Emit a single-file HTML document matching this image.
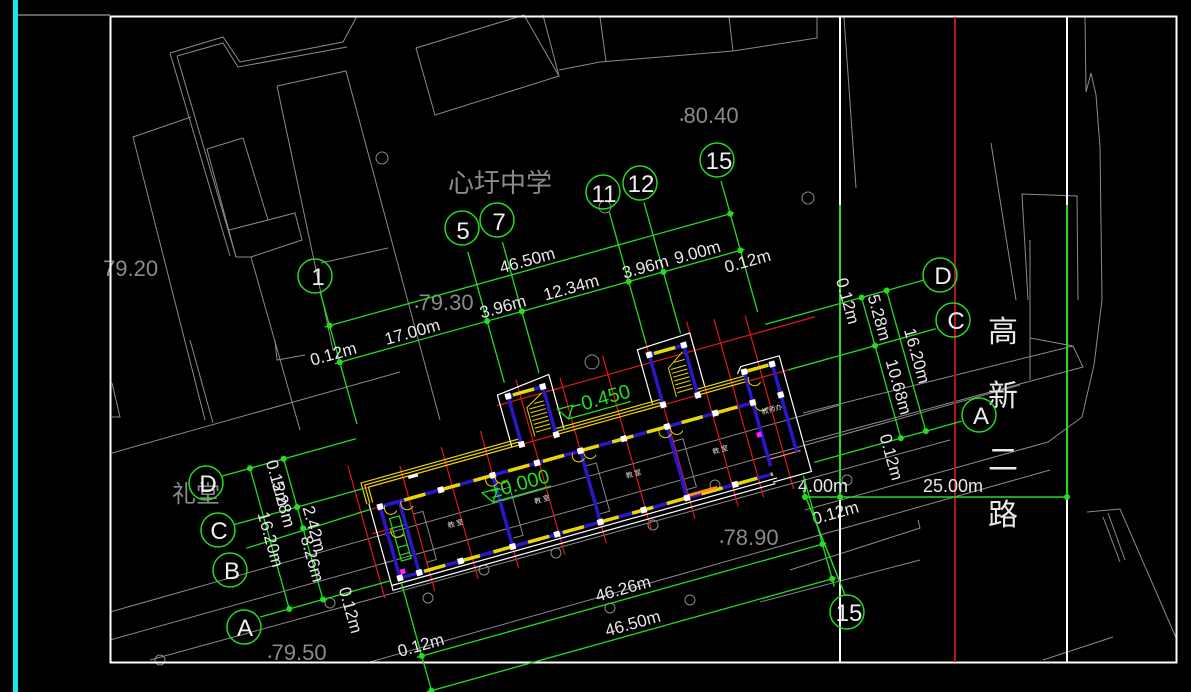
<!DOCTYPE html>
<html><head><meta charset="utf-8"><style>
html,body{margin:0;padding:0;background:#000;width:1191px;height:692px;overflow:hidden}
svg{display:block}
text{font-family:"Liberation Sans","Noto Sans CJK SC",sans-serif}
</style></head><body>
<svg width="1191" height="692" viewBox="0 0 1191 692" xmlns="http://www.w3.org/2000/svg">
<rect width="1191" height="692" fill="#000"/>
<rect x="13" y="0" width="5" height="692" fill="#18e6ea"/>
<line x1="18" y1="15" x2="110" y2="15" stroke="#9a9a9a" stroke-width="1.2"/>

<!-- gray background lines -->
<g stroke="#8a8a8a" stroke-width="1" fill="none">
<polyline points="170,53 223,37 240,62 343,42 357,16"/>
<polyline points="177,56 223,43 238,67 347,47"/>
<line x1="170" y1="53" x2="230" y2="256"/>
<line x1="177" y1="56" x2="236" y2="257"/>
<polyline points="191,117 133,137 205,420"/>
<polyline points="277,86 346,71 421,350 440,420"/>
<line x1="277" y1="86" x2="333" y2="350"/>
<polyline points="207,149 243,138 268,220"/>
<line x1="207" y1="149" x2="236" y2="257"/>
<polyline points="229,230 295,213 302,240 251,257 236,257"/>
<line x1="251" y1="257" x2="300" y2="430"/>
<line x1="321" y1="263" x2="388" y2="248"/>
<polyline points="416,48 524,15 559,76 435,115 416,48"/>
<line x1="543" y1="15" x2="559" y2="76"/>
<polyline points="559,70 600,62 733,51 817,38 817,17"/>
<line x1="600" y1="17" x2="606" y2="62"/>
<line x1="729" y1="17" x2="733" y2="51"/>
<line x1="844" y1="17" x2="856" y2="188"/>
<line x1="991" y1="143" x2="1016" y2="300"/>
<polyline points="1028,300 1022,194 1077,196 1078,300"/>
<polyline points="1085,17 1086,92 1091,73 1096,95 1100,147 1102,300 1094,365 1082,417 1048,442 805,510"/>
<line x1="1030" y1="240" x2="1030" y2="380"/>
<polyline points="1030,338 1073,346 1083,367 805,442"/>
<polyline points="803,413 1073,346"/>
<polyline points="1087,512 1120,509 1177,640"/>
<polyline points="1103,517 1120,562"/>
<polyline points="1108,513 1125,560"/>
<polyline points="790,570 920,528 918,520"/>
<polyline points="1043,660 1113,637"/>
<line x1="112" y1="453" x2="400" y2="372"/>
<line x1="190" y1="340" x2="213" y2="423"/>
<polyline points="112,383 120,417 112,417"/>
<polyline points="275,340 277,360 305,355"/>
<circle cx="382" cy="158" r="6"/>
<circle cx="808" cy="198" r="6"/>
<circle cx="605" cy="207" r="6"/>
<circle cx="592" cy="362" r="7"/>
<line x1="110" y1="612" x2="840" y2="405"/>
<line x1="110" y1="640" x2="1020" y2="385"/>
<line x1="150" y1="660" x2="950" y2="440"/>
<line x1="370" y1="662" x2="1050" y2="470"/>
<line x1="760" y1="602" x2="920" y2="560"/>
<circle cx="715" cy="485" r="5"/><circle cx="653" cy="525" r="5"/>
<circle cx="556" cy="553" r="5"/><circle cx="484" cy="570" r="5"/>
<circle cx="428" cy="598" r="5"/><circle cx="610" cy="608" r="5"/>
<circle cx="690" cy="600" r="5"/><circle cx="847" cy="480" r="5"/>
<circle cx="160" cy="660" r="5"/><circle cx="330" cy="603" r="5"/>
</g>
<g fill="#8a8a8a" font-size="22">
<text x="448" y="192" font-size="26">心圩中学</text>
<text x="103" y="276">79.20</text>
<text x="680" y="123"><tspan font-size="10">•</tspan>80.40</text>
<text x="415" y="310"><tspan font-size="10">•</tspan>79.30</text>
<text x="720" y="545"><tspan font-size="10">•</tspan>78.90</text>
<text x="268" y="660"><tspan font-size="10">•</tspan>79.50</text>
<text x="172" y="502" font-size="24">礼堂</text>
</g>

<!-- frame -->
<rect x="110.5" y="16.5" width="1066" height="646" fill="none" stroke="#fff" stroke-width="2"/>
<line x1="840" y1="17" x2="840" y2="205" stroke="#fff" stroke-width="2"/>
<line x1="840" y1="497" x2="840" y2="662" stroke="#fff" stroke-width="2"/>
<line x1="1067" y1="17" x2="1067" y2="205" stroke="#fff" stroke-width="2"/>
<line x1="1067" y1="497" x2="1067" y2="662" stroke="#fff" stroke-width="2"/>
<line x1="840" y1="205" x2="840" y2="497" stroke="#22dd22" stroke-width="2"/>
<line x1="1067" y1="205" x2="1067" y2="497" stroke="#22dd22" stroke-width="2"/>
<line x1="955" y1="17" x2="955" y2="662" stroke="#b01818" stroke-width="2"/>
<line x1="803" y1="497" x2="1067" y2="497" stroke="#22dd22" stroke-width="1.5"/>
<g fill="#22dd22"><circle cx="805" cy="497" r="3"/><circle cx="840" cy="497" r="3"/><circle cx="1067" cy="497" r="3"/></g>
<g fill="#e8e8e8" font-size="18"><text x="798" y="492">4.00m</text><text x="923" y="492">25.00m</text></g>
<g fill="#e8e8e8" font-size="30"><text x="988" y="342">高</text><text x="988" y="406">新</text><text x="988" y="470">二</text><text x="988" y="525">路</text></g>

<g transform="translate(400,578) rotate(-15.6)">
 <g stroke="#e01818" stroke-width="1.2">
  <line x1="-25" y1="-96" x2="470" y2="-96"/>
  <line x1="140" y1="-140" x2="470" y2="-140"/>
  <line x1="-25" y1="-74" x2="0" y2="-74"/>
  <line x1="-15" y1="-50" x2="20" y2="-50"/>
  <line x1="-20" y1="-122" x2="-20" y2="15"/>
  <line x1="30" y1="-108" x2="30" y2="22"/>
  <line x1="75" y1="-115" x2="75" y2="22"/>
  <line x1="117" y1="-120" x2="117" y2="22"/>
  <line x1="165" y1="-160" x2="165" y2="22"/>
  <line x1="208" y1="-150" x2="208" y2="22"/>
  <line x1="255" y1="-160" x2="255" y2="22"/>
  <line x1="300" y1="-165" x2="300" y2="22"/>
  <line x1="345" y1="-170" x2="345" y2="22"/>
  <line x1="372" y1="-165" x2="372" y2="20"/>
  <line x1="403" y1="-160" x2="403" y2="20"/>
 </g>
 <g stroke="#fff" stroke-width="1.2" fill="none">
  <polyline points="-10,-80 -10,10 387,10"/>
  <line x1="-10" y1="5" x2="390" y2="5"/>
  <polyline points="143,-96 143,-150 198,-156 198,-100"/>
  <polyline points="290,-100 290,-156 345,-158 345,-103"/>
  <polyline points="380,-106 385,-112 425,-112 425,8 385,8"/>
  <line x1="387" y1="-15" x2="420" y2="-15" stroke="#ff8888"/>
 </g>
 <g stroke="#e8d800" stroke-width="1.2" fill="none">
  <polyline points="-6,-80 -6,-96 153,-96"/>
  <polyline points="-9,-80 -9,-99 153,-99"/>
  <polyline points="-12,-80 -12,-102 153,-102"/>
  <line x1="189" y1="-96" x2="300" y2="-96"/>
  <line x1="189" y1="-99" x2="300" y2="-99"/>
  <line x1="189" y1="-102" x2="300" y2="-102"/>
  <line x1="336" y1="-96" x2="387" y2="-96"/>
  <line x1="336" y1="-99" x2="387" y2="-99"/>
  <line x1="336" y1="-102" x2="387" y2="-102"/>
 </g>
 <g stroke="#2a18c8" stroke-width="3.5" fill="none">
  <line x1="0" y1="0" x2="387" y2="0"/>
  <line x1="0" y1="-74" x2="387" y2="-74"/>
  <line x1="0" y1="0" x2="0" y2="-74"/>
  <line x1="20" y1="0" x2="20" y2="-74"/>
  <line x1="117" y1="0" x2="117" y2="-74"/>
  <line x1="208" y1="0" x2="208" y2="-74"/>
  <line x1="298" y1="0" x2="298" y2="-74"/>
  <line x1="387" y1="-8" x2="387" y2="-106"/>
  <line x1="416" y1="-15" x2="416" y2="-106"/>
  <line x1="387" y1="-106" x2="416" y2="-106"/>
  <line x1="153" y1="-96" x2="153" y2="-146"/>
  <line x1="189" y1="-96" x2="189" y2="-146"/>
  <line x1="153" y1="-146" x2="189" y2="-146"/>
  <line x1="300" y1="-96" x2="300" y2="-148"/>
  <line x1="336" y1="-96" x2="336" y2="-148"/>
  <line x1="300" y1="-148" x2="336" y2="-148"/>
 </g>
 <g stroke="#e8d800" stroke-width="3.5" stroke-dasharray="22 14">
  <line x1="25" y1="0" x2="387" y2="0"/>
  <line x1="25" y1="-74" x2="387" y2="-74"/>
  <line x1="158" y1="-146" x2="189" y2="-146"/>
  <line x1="305" y1="-148" x2="336" y2="-148"/>
  <line x1="390" y1="-106" x2="416" y2="-106"/>
 </g>
 <line x1="300" y1="-2" x2="330" y2="-2" stroke="#ff8a1a" stroke-width="3"/>
 <g stroke="#e8d800" stroke-width="1">
  <path d="M168,-100 L168,-130 L186,-140 M170,-104 H186 M170,-108 H186 M170,-112 H186 M170,-116 H186 M170,-120 H186 M170,-124 H186 M170,-128 H186 M176,-132 H186"/>
  <path d="M315,-100 L315,-130 L333,-142 M317,-104 H333 M317,-108 H333 M317,-112 H333 M317,-116 H333 M317,-120 H333 M317,-124 H333 M317,-128 H333 M322,-134 H333"/>
 </g>
 <g stroke="#22dd22" stroke-width="1.2" fill="none">
  <rect x="6" y="-60" width="10" height="44"/>
  <path d="M6,-50 H16 M6,-40 H16 M6,-30 H16 M6,-22 H16"/>
 </g>
 <g fill="#ff22ff"><rect x="2" y="-8" width="5" height="5"/><rect x="382" y="-44" width="5" height="5"/></g>
 <g fill="#fff">
  <rect x="-3" y="-3" width="6" height="6"/><rect x="17" y="-3" width="6" height="6"/>
  <rect x="60" y="-3" width="6" height="6"/><rect x="114" y="-3" width="6" height="6"/>
  <rect x="160" y="-3" width="6" height="6"/><rect x="205" y="-3" width="6" height="6"/>
  <rect x="250" y="-3" width="6" height="6"/><rect x="295" y="-3" width="6" height="6"/>
  <rect x="345" y="-3" width="6" height="6"/>
  <rect x="-3" y="-77" width="6" height="6"/><rect x="60" y="-77" width="6" height="6"/>
  <rect x="114" y="-77" width="6" height="6"/><rect x="160" y="-77" width="6" height="6"/>
  <rect x="205" y="-77" width="6" height="6"/><rect x="250" y="-77" width="6" height="6"/>
  <rect x="295" y="-77" width="6" height="6"/><rect x="345" y="-77" width="6" height="6"/>
  <rect x="384" y="-77" width="6" height="6"/><rect x="413" y="-77" width="6" height="6"/>
  <rect x="384" y="-109" width="6" height="6"/><rect x="413" y="-109" width="6" height="6"/>
  <rect x="150" y="-99" width="6" height="6"/><rect x="186" y="-99" width="6" height="6"/>
  <rect x="150" y="-149" width="6" height="6"/><rect x="186" y="-149" width="6" height="6"/>
  <rect x="297" y="-99" width="6" height="6"/><rect x="333" y="-99" width="6" height="6"/>
  <rect x="297" y="-151" width="6" height="6"/><rect x="333" y="-151" width="6" height="6"/>
  <rect x="35" y="-96" width="10" height="3"/>
 </g>
 <g stroke="#e8d800" stroke-width="1" fill="none">
  <path d="M5,-74 a6,6 0 0 0 10,8 M22,-74 a6,6 0 0 0 10,8 M110,-74 a6,6 0 0 0 10,8 M120,-74 a6,6 0 0 0 10,8 M200,-74 a6,6 0 0 0 10,8 M212,-74 a6,6 0 0 0 10,8 M290,-74 a6,6 0 0 0 10,8 M302,-74 a6,6 0 0 0 10,8 M390,-74 a6,6 0 0 0 10,8 M390,-100 a6,6 0 0 0 10,8 M5,-50 a6,6 0 0 0 10,8"/>
 </g>
 <g stroke="#888" stroke-width="1" fill="none">
  <path d="M30,-8 h10 v-50 h-10 M120,-8 h10 v-50 h-10 M210,-8 h10 v-50 h-10 M300,-8 h10 v-50 h-10"/>
 </g>
 <g fill="#ddd" font-size="7"><text x="60" y="-35">教 室</text><text x="150" y="-35">教 室</text><text x="245" y="-35">教 室</text><text x="335" y="-35">教 室</text><text x="393" y="-60">教师办</text></g>
 <g fill="none" stroke="#22dd22" stroke-width="1.3">
  <path d="M205,-108 H270 M205,-108 l8,-12 h-16 z"/>
  <path d="M110,-48 H170 M110,-48 l8,-12 h-16 z"/>
 </g>
 <g fill="#22dd22" font-size="20"><text x="210" y="-112">−0.450</text><text x="110" y="-52">±0.000</text></g>

 <g stroke="#22dd22" stroke-width="1.3" fill="none">
  <line x1="0" y1="-296" x2="0" y2="-160"/>
  <line x1="153" y1="-296" x2="153" y2="-160"/>
  <line x1="189" y1="-296" x2="189" y2="-160"/>
  <line x1="300" y1="-296" x2="300" y2="-160"/>
  <line x1="336" y1="-296" x2="336" y2="-160"/>
  <line x1="416" y1="-296" x2="416" y2="-160"/>
  <line x1="0" y1="5" x2="0" y2="125"/>
  <line x1="416" y1="10" x2="416" y2="125"/>
  <line x1="-5" y1="-262" x2="420" y2="-262"/>
  <line x1="-5" y1="-224" x2="420" y2="-224"/>
  <line x1="-5" y1="81" x2="420" y2="81"/>
  <line x1="-5" y1="117" x2="420" y2="117"/>
  <line x1="-115" y1="-148" x2="-115" y2="3"/>
  <line x1="-80" y1="-148" x2="-80" y2="3"/>
  <line x1="520" y1="-148" x2="520" y2="0"/>
  <line x1="546" y1="-148" x2="546" y2="0"/>
  <line x1="-145" y1="-146" x2="-5" y2="-146"/>
  <line x1="-145" y1="-96" x2="-12" y2="-96"/>
  <line x1="-140" y1="-70" x2="-10" y2="-74"/>
  <line x1="-145" y1="0" x2="-10" y2="0"/>
  <line x1="420" y1="-146" x2="585" y2="-146"/>
  <line x1="430" y1="-96" x2="583" y2="-96"/>
  <line x1="430" y1="0" x2="583" y2="0"/>
 </g>
 <g fill="#22dd22">
  <circle cx="0" cy="-262" r="3"/><circle cx="153" cy="-224" r="3"/><circle cx="189" cy="-224" r="3"/>
  <circle cx="300" cy="-224" r="3"/><circle cx="336" cy="-224" r="3"/><circle cx="416" cy="-262" r="3"/>
  <circle cx="0" cy="-224" r="3"/><circle cx="416" cy="-224" r="3"/>
  <circle cx="0" cy="81" r="3"/><circle cx="416" cy="81" r="3"/><circle cx="0" cy="117" r="3"/><circle cx="416" cy="117" r="3"/>
  <circle cx="-115" cy="-146" r="3"/><circle cx="-115" cy="0" r="3"/>
  <circle cx="-80" cy="-146" r="3"/><circle cx="-80" cy="-96" r="3"/><circle cx="-80" cy="-74" r="3"/><circle cx="-80" cy="0" r="3"/>
  <circle cx="520" cy="-146" r="3"/><circle cx="520" cy="-96" r="3"/><circle cx="520" cy="0" r="3"/>
  <circle cx="546" cy="-146" r="3"/><circle cx="546" cy="0" r="3"/>
 </g>
 <g fill="#e8e8e8" font-size="17">
  <text x="208" y="-266" text-anchor="middle">46.50m</text>
  <text x="-4" y="-228" text-anchor="middle">0.12m</text>
  <text x="78" y="-228" text-anchor="middle">17.00m</text>
  <text x="172" y="-228" text-anchor="middle">3.96m</text>
  <text x="243" y="-228" text-anchor="middle">12.34m</text>
  <text x="320" y="-228" text-anchor="middle">3.96m</text>
  <text x="374" y="-228" text-anchor="middle">9.00m</text>
  <text x="420" y="-206" text-anchor="middle">0.12m</text>
  <text x="212" y="76" text-anchor="middle">46.26m</text>
  <text x="212" y="112" text-anchor="middle">46.50m</text>
  <text x="2" y="76" text-anchor="middle">0.12m</text>
  <text x="437" y="60" text-anchor="middle">0.12m</text>
 </g>
 <g fill="#e8e8e8" font-size="17">
  <text transform="translate(-120,-72) rotate(90)" text-anchor="middle">16.20m</text>
  <text transform="translate(-98,-148) rotate(90)">0.12m</text>
  <text transform="translate(-98,-126) rotate(90)">5.28m</text>
  <text transform="translate(-75,-94) rotate(90)">2.42m</text>
  <text transform="translate(-85,-42) rotate(90)" text-anchor="middle">8.26m</text>
  <text transform="translate(-62,-6) rotate(90)">0.12m</text>
  <text transform="translate(526,-122) rotate(90)" text-anchor="middle">5.28m</text>
  <text transform="translate(526,-50) rotate(90)" text-anchor="middle">10.68m</text>
  <text transform="translate(552,-75) rotate(90)" text-anchor="middle">16.20m</text>
  <text transform="translate(500,-170) rotate(90)">0.12m</text>
  <text transform="translate(500,-8) rotate(90)">0.12m</text>
 </g>
</g>

<line x1="803" y1="490" x2="845" y2="595" stroke="#22dd22" stroke-width="1.5"/>
<g stroke="#22dd22" stroke-width="1.5" fill="none">
 <circle cx="315" cy="276" r="17"/>
 <circle cx="462" cy="228" r="17"/><circle cx="497" cy="220" r="17"/>
 <circle cx="603" cy="192" r="17"/><circle cx="640" cy="183" r="17"/>
 <circle cx="717" cy="160" r="17"/>
 <circle cx="847" cy="612" r="17"/>
 <circle cx="206" cy="483" r="17"/><circle cx="218" cy="530" r="17"/>
 <circle cx="230" cy="570" r="17"/><circle cx="244" cy="627" r="17"/>
 <circle cx="940" cy="275" r="17"/><circle cx="953" cy="320" r="17"/>
 <circle cx="979" cy="415" r="17"/>
</g>
<g fill="#f0f0f0" font-size="24" text-anchor="middle">
 <text x="318" y="285">1</text>
 <text x="463" y="239">5</text><text x="499" y="230">7</text>
 <text x="604" y="202">11</text><text x="641" y="192">12</text>
 <text x="719" y="169">15</text><text x="849" y="621">15</text>
 <text x="208" y="492">D</text><text x="219" y="539">C</text>
 <text x="232" y="579">B</text><text x="245" y="636">A</text>
 <text x="943" y="284">D</text><text x="956" y="329">C</text><text x="981" y="424">A</text>
</g>
</svg>
</body></html>
